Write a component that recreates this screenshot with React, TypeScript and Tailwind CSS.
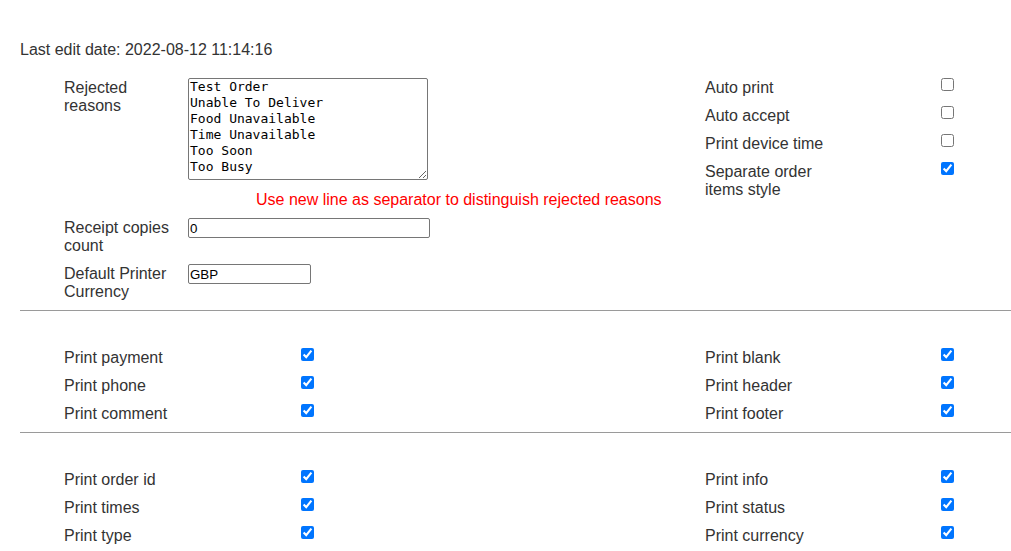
import React from "react";

const topRight = [
  { label: "Auto print", checked: false },
  { label: "Auto accept", checked: false },
  { label: "Print device time", checked: false },
  { label: "Separate order items style", checked: true },
];

const sections = [
  {
    left: ["Print payment", "Print phone", "Print comment"],
    right: ["Print blank", "Print header", "Print footer"],
  },
  {
    left: ["Print order id", "Print times", "Print type"],
    right: ["Print info", "Print status", "Print currency"],
  },
];

const Check = ({ checked }: { checked: boolean }) => (
  <input type="checkbox" defaultChecked={checked} className="m-0 w-[13px] h-[13px] shrink-0" />
);

const RightRow = ({ label, checked }: { label: string; checked: boolean }) => (
  <div className="flex items-start pt-[5px] pb-[4px]">
    <div className="w-[236px] pt-[1px]">
      <div className="max-w-[140px]">{label}</div>
    </div>
    <Check checked={checked} />
  </div>
);

const App = () => {
  return (
    <div className="min-h-screen bg-white pt-[41px] pl-5 text-[16px] leading-[18px] text-[#333] font-['Liberation_Sans',Arial,sans-serif]">
      <div>Last edit date: 2022-08-12 11:14:16</div>

      <div className="flex mt-[14px]">
        <div className="w-[685px] shrink-0 pl-[44px]">
          <div className="flex items-start py-[5px]">
            <div className="w-[124px] pt-[1px]">Rejected reasons</div>
            <textarea
              defaultValue={"Test Order\nUnable To Deliver\nFood Unavailable\nTime Unavailable\nToo Soon\nToo Busy"}
              className="w-[240px] h-[102px] border border-[#767676] rounded-[2px] pl-[1px] pt-0 text-[13px] leading-4 text-black font-['DejaVu_Sans_Mono',monospace] resize"
            />
          </div>
          <div className="pt-[6px] pb-[4px] pl-[192px] text-[#ff0000]">
            Use new line as separator to distinguish rejected reasons
          </div>
          <div className="flex items-start pt-[5px] pb-[4px]">
            <div className="w-[124px] pt-[1px]">Receipt copies count</div>
            <input
              type="text"
              defaultValue="0"
              className="w-[242px] h-[20px] border border-[#767676] rounded-[2px] px-[1px] text-[13.33px] text-black"
            />
          </div>
          <div className="flex items-start pt-[5px] pb-[4px]">
            <div className="w-[124px] pt-[1px]">Default Printer Currency</div>
            <input
              type="text"
              defaultValue="GBP"
              className="w-[123px] h-[20px] border border-[#767676] rounded-[2px] px-[1px] text-[13.33px] text-black"
            />
          </div>
        </div>
        <div>
          {topRight.map((r) => (
            <RightRow key={r.label} label={r.label} checked={r.checked} />
          ))}
        </div>
      </div>

      {sections.map((s, i) => (
        <div key={i}>
          <div className="mt-[5px] border-t border-[#9a9a9a]" />
          <div className="flex pt-[32px]">
            <div className="w-[685px] shrink-0 pl-[44px]">
              {s.left.map((l) => (
                <div key={l} className="flex items-start pt-[5px] pb-[4px]">
                  <div className="w-[237px] pt-[1px]">{l}</div>
                  <Check checked />
                </div>
              ))}
            </div>
            <div>
              {s.right.map((l) => (
                <RightRow key={l} label={l} checked />
              ))}
            </div>
          </div>
        </div>
      ))}
    </div>
  );
};

export default App;
